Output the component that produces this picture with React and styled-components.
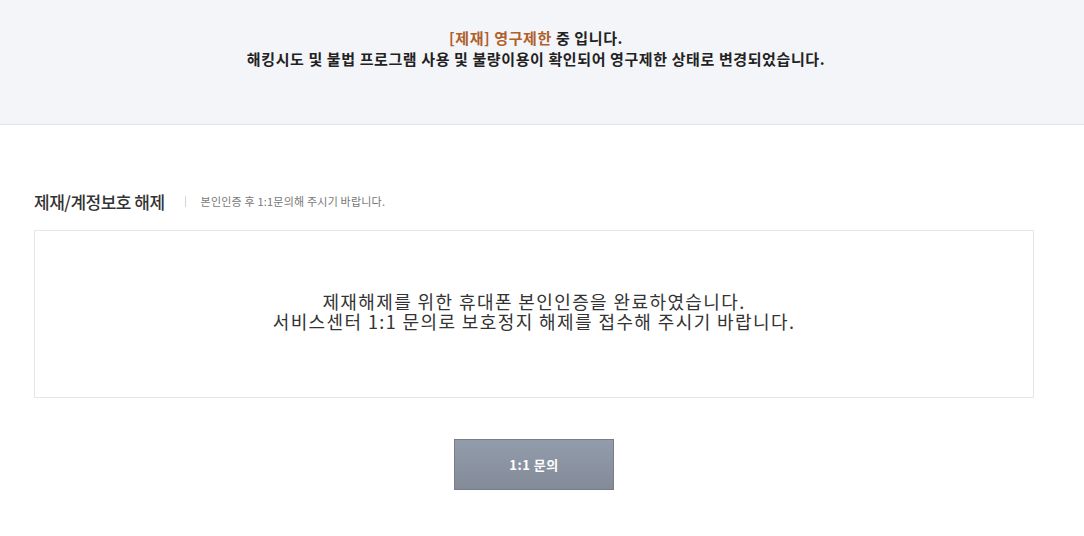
import React from "react";
import styled, { createGlobalStyle } from "styled-components";

const Global = createGlobalStyle`
  html, body { margin: 0; padding: 0; background: #fff; }
  body { font-family: "Noto Sans CJK KR", "Noto Sans", sans-serif; color: #333; }
`;

const Banner = styled.div`
  height: 125px;
  box-sizing: border-box;
  background: #f4f5f9;
  border-bottom: 1px solid #e3e5ea;
  display: flex;
  flex-direction: column;
  align-items: center;
  padding-top: 27px;
  padding-right: 12px;
`;

const BannerLine = styled.p`
  margin: 0;
  font-size: 15px;
  font-weight: 700;
  line-height: 21px;
  color: #222;
  letter-spacing: 0.6px;
`;

const Accent = styled.span`
  color: #b0602a;
`;

const Main = styled.div`
  padding: 64px 50px 0 34px;
`;

const TitleRow = styled.div`
  display: flex;
  align-items: center;
  height: 24px;
`;

const Title = styled.h2`
  margin: 0;
  font-size: 17px;
  font-weight: 500;
  color: #333;
  letter-spacing: -0.5px;
`;

const Divider = styled.span`
  width: 1px;
  height: 11px;
  background: #d6d6d6;
  margin: 0 15px 0 20px;
`;

const Sub = styled.span`
  font-size: 11px;
  color: #777;
  letter-spacing: 0.2px;
`;

const Box = styled.div`
  margin-top: 17px;
  height: 168px;
  box-sizing: border-box;
  border: 1px solid #e6e6e6;
  display: flex;
  flex-direction: column;
  align-items: center;
  justify-content: center;
  padding-bottom: 6px;
`;

const BoxLine = styled.p`
  margin: 0;
  font-family: "Noto Sans CJK KR", sans-serif;
  font-size: 18px;
  font-weight: 400;
  line-height: 20px;
  color: #333;
  letter-spacing: 1.4px;
`;

const ButtonRow = styled.div`
  display: flex;
  justify-content: center;
  margin-top: 41px;
`;

const Button = styled.button`
  width: 160px;
  height: 51px;
  border: 1px solid #777e8a;
  background: linear-gradient(#939cab, #838b99);
  color: #fff;
  font-family: "Noto Sans CJK KR", sans-serif;
  font-size: 13px;
  font-weight: 700;
  letter-spacing: 0.5px;
  cursor: pointer;
`;

export default function App() {
  return (
    <>
      <Global />
      <Banner>
        <BannerLine>
          <Accent>[제재] 영구제한</Accent> 중 입니다.
        </BannerLine>
        <BannerLine>
          해킹시도 및 불법 프로그램 사용 및 불량이용이 확인되어 영구제한 상태로 변경되었습니다.
        </BannerLine>
      </Banner>
      <Main>
        <TitleRow>
          <Title>제재/계정보호 해제</Title>
          <Divider />
          <Sub>본인인증 후 1:1문의해 주시기 바랍니다.</Sub>
        </TitleRow>
        <Box>
          <BoxLine>제재해제를 위한 휴대폰 본인인증을 완료하였습니다.</BoxLine>
          <BoxLine>서비스센터 1:1 문의로 보호정지 해제를 접수해 주시기 바랍니다.</BoxLine>
        </Box>
        <ButtonRow>
          <Button>1:1 문의</Button>
        </ButtonRow>
      </Main>
    </>
  );
}
